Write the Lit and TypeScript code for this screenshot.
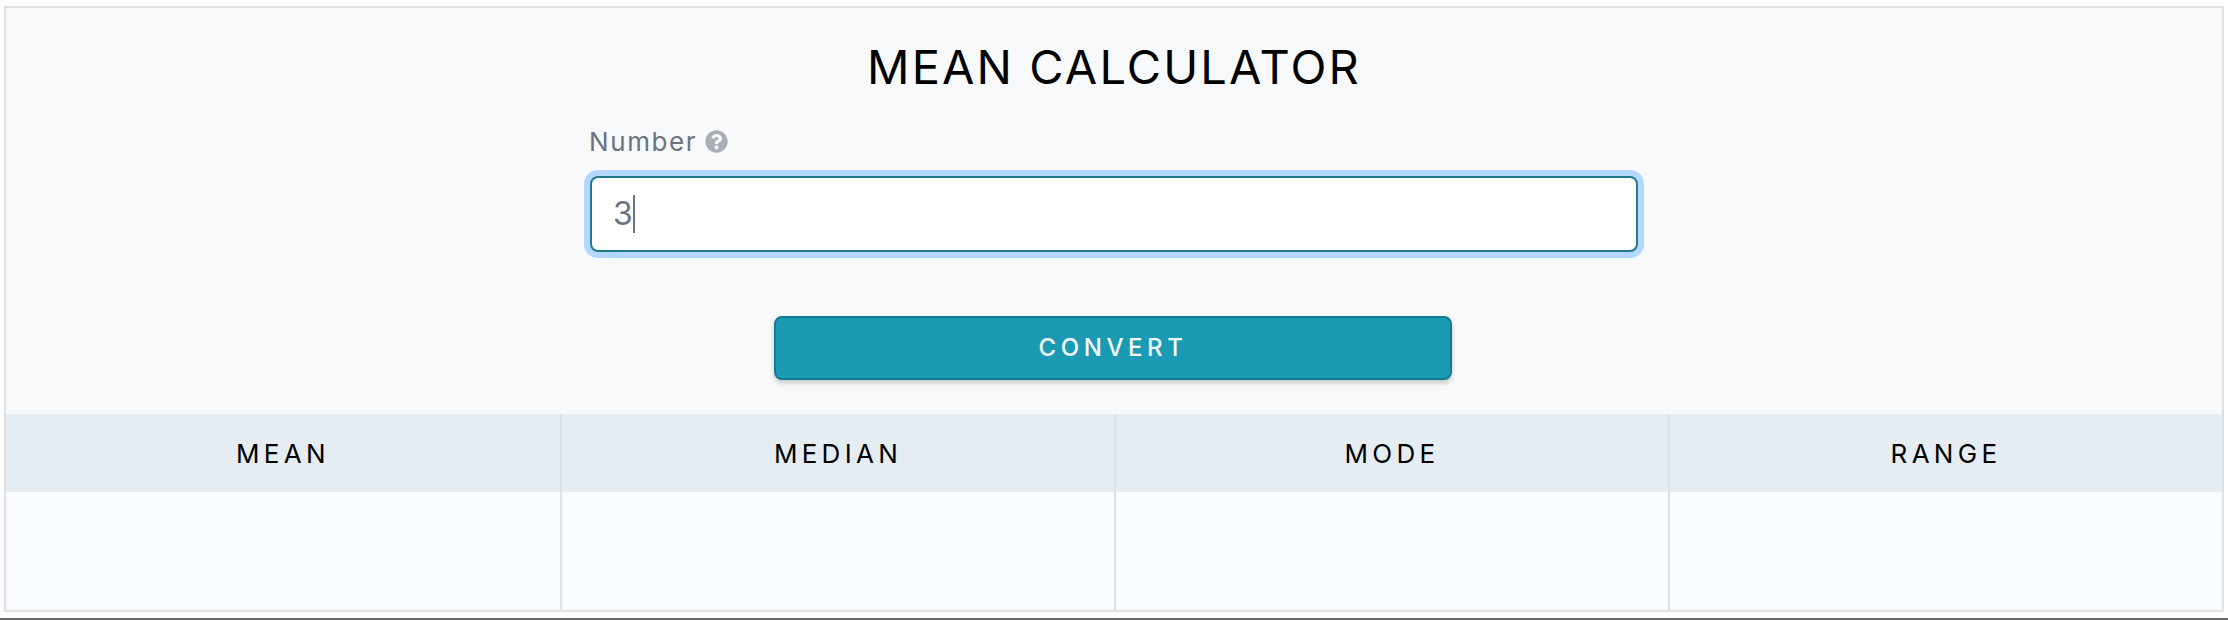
import { customElement } from 'lit/decorators.js';
import { css, html, LitElement, svg } from 'lit';

const helpIcon = svg`<path d="M504 256c0 136.997-111.043 248-248 248S8 392.997 8 256C8 119.083 119.043 8 256 8s248 111.083 248 248zM262.655 90c-54.497 0-89.255 22.957-116.549 63.758-3.536 5.286-2.353 12.415 2.715 16.258l34.699 26.31c5.205 3.947 12.621 3.008 16.665-2.122 17.864-22.658 30.113-35.797 57.303-35.797 20.429 0 45.698 13.148 45.698 32.958 0 14.976-12.363 22.667-32.534 33.976C247.128 238.528 216 254.941 216 296v4c0 6.627 5.373 12 12 12h56c6.627 0 12-5.373 12-12v-1.333c0-28.462 83.186-29.647 83.186-106.667 0-58.002-60.165-102-116.531-102zM256 338c-25.365 0-46 20.635-46 46 0 25.364 20.635 46 46 46s46-20.636 46-46c0-25.365-20.635-46-46-46z"/>`;

@customElement('app-root')
export class AppRoot extends LitElement {
  static override styles = css`
    :host {
      display: block;
      background: #fff;
      font-family: Inter, 'Liberation Sans', sans-serif;
    }

    .page {
      padding: 6px 4px 6px;
    }

    .card {
      border: 2px solid #dde1e5;
      background: #f7f9fb;
    }

    .form {
      display: flex;
      flex-direction: column;
      align-items: center;
      height: 406px;
      box-sizing: border-box;
      padding-top: 31px;
    }

    h1 {
      margin: 0;
      height: 56px;
      line-height: 56px;
      font-size: 47px;
      font-weight: 400;
      letter-spacing: 2.1px;
      color: #000;
    }

    .field {
      width: 1048px;
      margin-top: 30px;
    }

    .label {
      display: flex;
      align-items: center;
      gap: 8px;
      height: 32px;
      margin-left: -1px;
      font-size: 26px;
      font-weight: 400;
      letter-spacing: 1.6px;
      color: #6b7280;
    }

    .label svg {
      width: 23px;
      height: 23px;
      fill: #a9aeb6;
    }

    .input {
      display: flex;
      align-items: center;
      box-sizing: border-box;
      height: 76px;
      margin-top: 19px;
      padding: 0 0 0 21px;
      border: 2px solid #1f7a8c;
      border-radius: 8px;
      background: #fff;
      box-shadow: 0 0 0 6px #b3d7ff;
      font-size: 32px;
      color: #6b7280;
    }

    .input span:first-child {
      padding-bottom: 2px;
    }

    .caret {
      width: 2px;
      height: 38px;
      background: #6b7280;
    }

    button {
      display: block;
      box-sizing: border-box;
      width: 678px;
      height: 64px;
      margin: 64px 2px 0 0;
      padding: 0 0 2px;
      border: 2px solid #147a8f;
      border-radius: 8px;
      background: #1a9ab3;
      box-shadow: 0 3px 5px rgba(0, 0, 0, 0.2);
      font-family: inherit;
      font-size: 24px;
      font-weight: 500;
      letter-spacing: 4.6px;
      color: #f4fbfd;
    }

    .table {
      display: grid;
      grid-template-columns: repeat(4, 1fr);
      grid-template-rows: 78px 118px;
    }

    .cell {
      box-sizing: border-box;
    }

    .cell:not(:nth-child(4n + 1)) {
      border-left: 2px solid #dde1e5;
    }

    .head {
      display: flex;
      align-items: center;
      justify-content: center;
      background: #e5edf3;
      font-size: 26px;
      font-weight: 400;
      letter-spacing: 4.3px;
      color: #000;
    }

    .value {
      background: #f8fcfe;
    }

    .rule {
      height: 2px;
      background: #666;
    }
  `;

  override render() {
    const columns = ['MEAN', 'MEDIAN', 'MODE', 'RANGE'];

    return html`
      <div class="page">
        <div class="card">
          <div class="form">
            <h1>MEAN CALCULATOR</h1>
            <div class="field">
              <div class="label">
                Number
                <svg viewBox="0 0 512 512">${helpIcon}</svg>
              </div>
              <div class="input" role="textbox"><span>3</span><span class="caret"></span></div>
            </div>
            <button>CONVERT</button>
          </div>
          <div class="table">
            ${columns.map((name) => html`<div class="cell head">${name}</div>`)}
            ${columns.map(() => html`<div class="cell value"></div>`)}
          </div>
        </div>
      </div>
      <div class="rule"></div>
    `;
  }
}
